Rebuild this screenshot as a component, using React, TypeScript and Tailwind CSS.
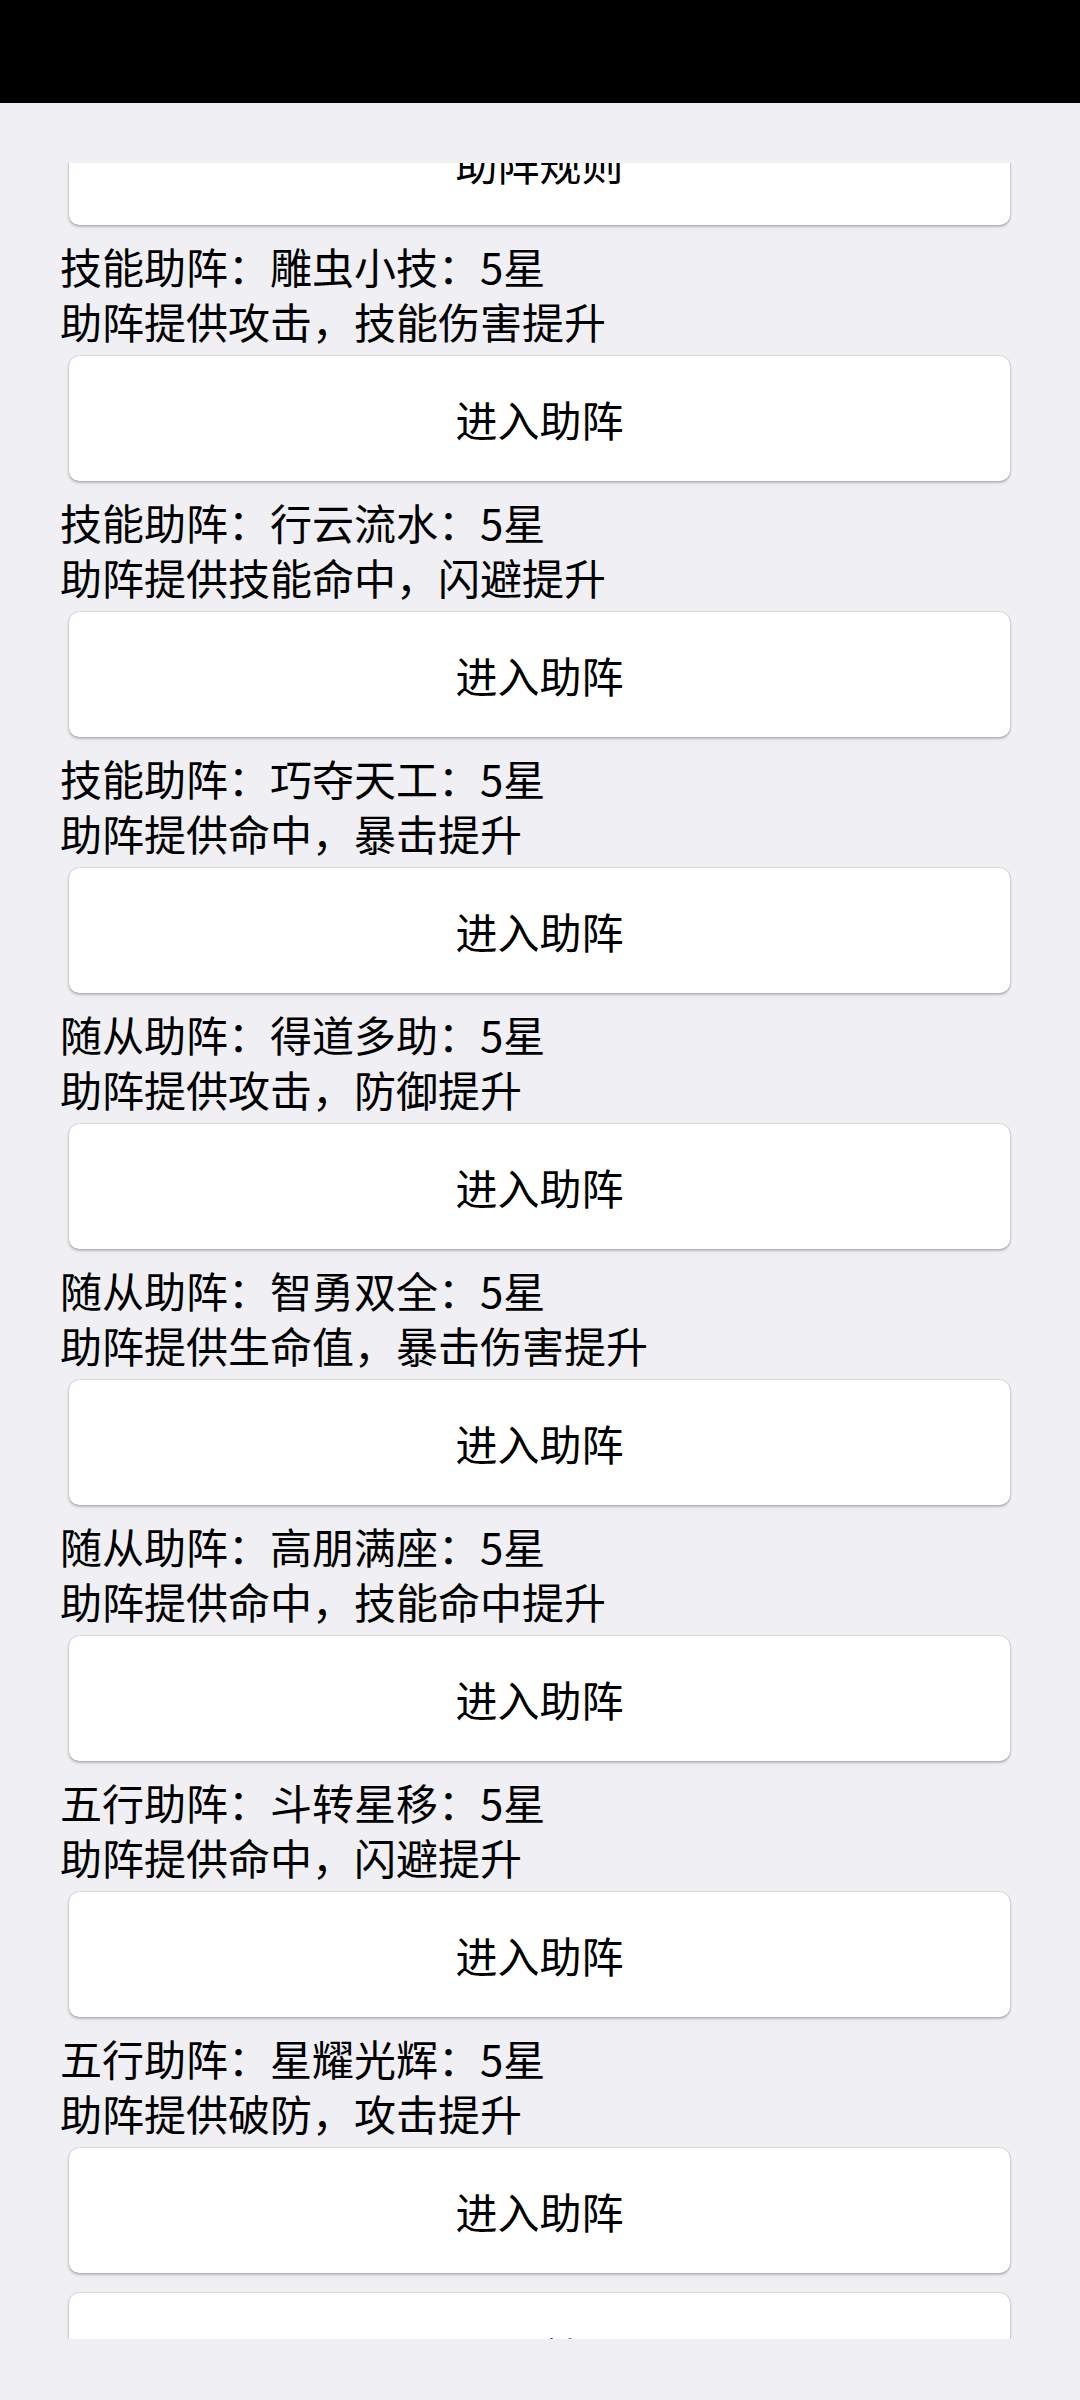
import React from 'react';

const items = [
  { title: '技能助阵：雕虫小技：5星', desc: '助阵提供攻击，技能伤害提升' },
  { title: '技能助阵：行云流水：5星', desc: '助阵提供技能命中，闪避提升' },
  { title: '技能助阵：巧夺天工：5星', desc: '助阵提供命中，暴击提升' },
  { title: '随从助阵：得道多助：5星', desc: '助阵提供攻击，防御提升' },
  { title: '随从助阵：智勇双全：5星', desc: '助阵提供生命值，暴击伤害提升' },
  { title: '随从助阵：高朋满座：5星', desc: '助阵提供命中，技能命中提升' },
  { title: '五行助阵：斗转星移：5星', desc: '助阵提供命中，闪避提升' },
  { title: '五行助阵：星耀光辉：5星', desc: '助阵提供破防，攻击提升' },
];

const font = { fontFamily: '"Noto Sans CJK SC", "Noto Sans", sans-serif' };

const Card = ({ label }: { label: string }) => (
  <button className="mx-[9px] mr-[10px] flex h-[125px] w-[941px] items-center justify-center rounded-[10px] bg-white text-[42px] leading-[55px] text-black shadow-[0_2px_3px_rgba(0,0,0,0.22),0_0_1.5px_rgba(0,0,0,0.35)]">
    {label}
  </button>
);

export default function App() {
  return (
    <div className="flex h-[2400px] w-[1080px] flex-col bg-[#efeff4]" style={font}>
      <div className="h-[103px] shrink-0 bg-black" />
      <div className="mt-[60px] h-[2176px] overflow-hidden">
        <div className="-mt-[63px] flex flex-col px-[60px]">
          <Card label="助阵规则" />
          {items.map((item, i) => (
            <div key={i} className="flex flex-col">
              <div className="mt-[13px] text-[42px] leading-[55px] text-black">{item.title}</div>
              <div className="text-[42px] leading-[55px] text-black">{item.desc}</div>
              <div className="mt-[8px]">
                <Card label="进入助阵" />
              </div>
            </div>
          ))}
          <div className="mt-[20px]">
            <Card label="返回首页" />
          </div>
        </div>
      </div>
    </div>
  );
}
